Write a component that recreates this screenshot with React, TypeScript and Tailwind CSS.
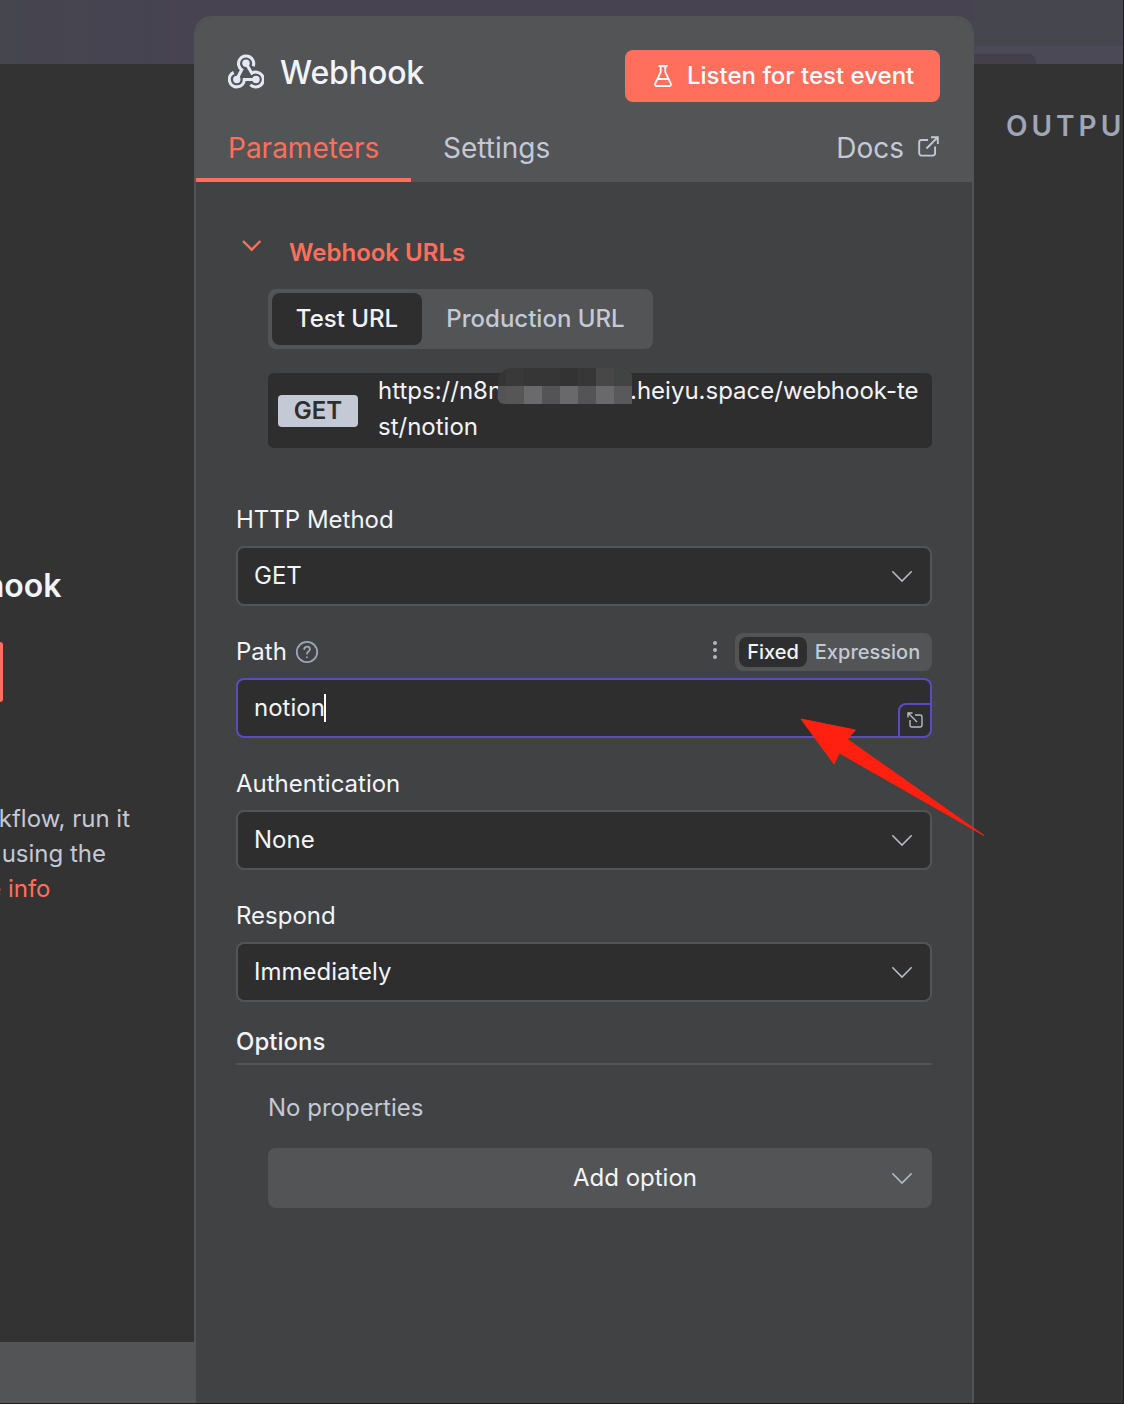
import { FC, ReactNode } from 'react'
import clsx from 'clsx'

interface FieldProps {
  label: ReactNode
  extra?: ReactNode
  children: ReactNode
}

const MOSAIC = [
  ['bg-[#353535]', 'bg-[#393939]', 'bg-[#363636]', 'bg-[#363637]', 'bg-[#333333]', 'bg-[#373737]', 'bg-[#474747]', 'bg-[#424343]'],
  ['bg-[#545456]', 'bg-[#565657]', 'bg-[#6a6a6c]', 'bg-[#545456]', 'bg-[#69696b]', 'bg-[#545456]', 'bg-[#69696b]', 'bg-[#59595b]'],
]

const Chevron: FC = () => (
  <svg className="mt-px h-3 w-[22px] shrink-0 text-[#b4bac7]" viewBox="0 0 22 12" fill="none" stroke="currentColor" strokeWidth="1.6" strokeLinecap="round">
    <path d="M1.8 .8 11 10 20.2 .8" />
  </svg>
)

const WebhookIcon: FC = () => (
  <svg className="-mt-0.5 size-9 shrink-0 text-[#e4e8f6]" viewBox="0 0 36 36" fill="none" stroke="currentColor" strokeWidth="3.1">
    <path d="M25.2 12.3A7.6 7.6 0 1 0 13.7 15.8L8.8 25.3" />
    <path d="M5.7 18.5A7.5 7.5 0 1 0 16.3 25.5H28" />
    <path d="M18 9.3 23.8 19.2A7.5 7.5 0 1 1 22.4 30.7" />
    <g fill="currentColor" stroke="none">
      <circle cx="18" cy="9.3" r="3.7" />
      <circle cx="8.8" cy="25.5" r="3.7" />
      <circle cx="28" cy="25.5" r="3.7" />
    </g>
  </svg>
)

const Field: FC<FieldProps> = ({ label, extra, children }) => {
  return (
    <div>
      <div className="flex h-[52px] items-center justify-between">
        <div className="flex items-center">{label}</div>
        {extra}
      </div>
      {children}
    </div>
  )
}

const Select: FC<{ value: string }> = ({ value }) => {
  return (
    <div className="flex h-[60px] items-center justify-between rounded-lg border-2 border-[#525455] bg-[#2e2e2e] pl-4 pr-[17px]">
      <span>{value}</span>
      <Chevron />
    </div>
  )
}

const Backdrop: FC<{ children?: ReactNode; className?: string }> = ({ children, className }) => (
  <div className={clsx('h-16 shrink-0', className)}>{children}</div>
)

const LeftPane: FC = () => {
  return (
    <aside className="flex w-[194px] shrink-0 flex-col overflow-hidden bg-[#333333]">
      <Backdrop className="bg-linear-to-r from-[#46464f] to-[#474351]" />
      <div className="mt-[502px] flex h-10 items-center justify-end pr-[132.5px] text-[32px] font-semibold whitespace-nowrap text-[#f2f4fd]">
        hook
      </div>
      <div className="mt-9 h-[60px] w-[3px] rounded-r-[3px] bg-[#ff6f5c]" />
      <div className="mt-[99px] text-2xl leading-[35px] whitespace-nowrap text-[#c3c9d5]">
        <p className="flex justify-end pr-[64px]">kflow, run it</p>
        <p className="flex justify-end pr-[88px]">using the</p>
        <p className="flex justify-end pr-[143.5px] text-[#ff6f5c]">e info</p>
      </div>
      <div className="mt-auto h-[61px] bg-[#525455]" />
    </aside>
  )
}

const RightPane: FC = () => {
  return (
    <aside className="flex min-w-0 flex-1 flex-col overflow-hidden bg-[#333333]">
      <Backdrop className="flex flex-col justify-end bg-[#46464f]">
        <div className="h-[18px] bg-[#4c4957] pt-2">
          <div className="h-2.5 w-[62px] rounded-tr-lg bg-[#433f4b]" />
        </div>
      </Backdrop>
      <div className="mt-10 pl-8 text-[28px] leading-[44px] font-semibold tracking-[4px] text-[#9fa6b5]">OUTPU</div>
    </aside>
  )
}

const Header: FC = () => {
  return (
    <header className="bg-[#525455] pt-8">
      <div className="flex h-[52px] justify-between px-8">
        <div className="flex items-center gap-4 pb-1.5">
          <WebhookIcon />
          <h1 className="text-[32px] font-medium tracking-[-0.1px]">Webhook</h1>
        </div>
        <button className="flex w-[315px] items-center rounded-lg bg-[#ff6f5c] pl-[29px] text-2xl font-medium text-white">
          <svg className="mr-[15px] h-[22px] w-[18px]" viewBox="0 0 18 22" fill="none" stroke="currentColor" strokeWidth="1.8" strokeLinejoin="round">
            <path d="M4.5 1h9M6.7 1v6.2L1.3 18.4C.7 19.8 1.4 21 2.7 21h12.6c1.3 0 2-1.2 1.4-2.6L11.3 7.2V1M3.6 14h10.8" />
          </svg>
          Listen for test event
        </button>
      </div>
      <nav className="flex h-20 text-[28px]">
        <div className="w-[215px] border-b-4 border-[#ff6f5c] pt-[25px] pl-8 leading-[42px] text-[#ff6f5c]">Parameters</div>
        <div className="pt-[25px] pl-8 leading-[42px] text-[#c3c9d5]">Settings</div>
        <div className="ml-auto flex pt-[25px] pr-[33px] leading-[42px] text-[#c3c9d5]">
          Docs
          <svg className="mt-[9px] ml-[14px] size-[21px]" viewBox="0 0 21 21" fill="none" stroke="currentColor" strokeWidth="1.9">
            <path d="M10 4H3.5A2.3 2.3 0 0 0 1.2 6.3v11A2.3 2.3 0 0 0 3.5 19.6h11.3a2.3 2.3 0 0 0 2.3-2.3V10.5M13 1.2h6.8V8M19.6 1.4 8.5 12.5" />
          </svg>
        </div>
      </nav>
    </header>
  )
}

const WebhookUrls: FC = () => {
  return (
    <section>
      <div className="flex h-9 text-[#ff6f5c]">
        <svg className="mt-[5px] ml-[6px] h-3 w-5" viewBox="0 0 20 12" fill="none" stroke="currentColor" strokeWidth="2.4">
          <path d="M1 1 9.7 9.7 18.4 1" />
        </svg>
        <h2 className="ml-[27px] leading-9 font-semibold">Webhook URLs</h2>
      </div>
      <div className="mt-[18px] ml-8 flex h-[60px] w-[385px] rounded-lg bg-[#525455] p-1 font-medium">
        <div className="flex w-[150px] items-center justify-center rounded-lg bg-[#2e2e2e]">Test URL</div>
        <div className="flex flex-1 items-center justify-center text-[#c3c9d5]">Production URL</div>
      </div>
      <div className="mt-6 ml-8 flex h-[75px] rounded-md bg-[#2e2e2e] pl-2.5">
        <div className="mt-[22px] flex h-8 w-20 items-center justify-center rounded bg-[#c3c9d5] font-semibold text-[#2e2e2e]">GET</div>
        <div className="ml-5 leading-9 whitespace-nowrap">
          <div className="flex">
            <span className="w-[127px]">https://n8n</span>
            <span className="relative z-10 w-[125px]">
              {/* blurred out host name */}
              <span className="absolute -top-[5px] -left-[7px] grid w-[136px] grid-cols-[8px_repeat(7,18px)] overflow-hidden rounded-t-[14px] rounded-bl-[6px]">
                {MOSAIC.map((row, y) => row.map((cell, x) => <i key={`${y}-${x}`} className={clsx('h-[18px]', cell)} />))}
              </span>
            </span>
            <span>.heiyu.space/webhook-te</span>
          </div>
          <div>st/notion</div>
        </div>
      </div>
    </section>
  )
}

const PathField: FC = () => {
  return (
    <Field
      label={
        <>
          Path
          <svg className="ml-2 size-6 text-[#9fa6b5]" viewBox="0 0 24 24" fill="none" stroke="currentColor" strokeWidth="1.8" strokeLinecap="round">
            <circle cx="12" cy="12" r="10.2" />
            <path d="M9.2 9.2c.3-1.7 1.4-2.5 2.9-2.5 1.6 0 2.8 1 2.8 2.5 0 2.2-2.9 2.3-2.9 4.5M12 17.2v.1" />
          </svg>
        </>
      }
      extra={
        <div className="flex items-center">
          <div className="mr-[18px] flex flex-col gap-[3px] pb-1">
            <i className="size-1 rounded-full bg-[#b0b6c3]" />
            <i className="size-1 rounded-full bg-[#b0b6c3]" />
            <i className="size-1 rounded-full bg-[#b0b6c3]" />
          </div>
          <div className="flex h-[38px] w-[197px] rounded-lg bg-[#525455] p-1 text-xl font-medium">
            <div className="flex w-[68px] items-center justify-center rounded-lg bg-[#2e2e2e]">Fixed</div>
            <div className="flex flex-1 items-center justify-center text-[#c3c9d5]">Expression</div>
          </div>
        </div>
      }
    >
      <div className="flex h-[60px] items-center overflow-hidden rounded-lg border-2 border-[#5b4bbf] bg-[#2e2e2e] pl-4">
        <span>notion</span>
        <i className="-ml-px h-7 w-0.5 bg-white" />
        <div className="ml-auto flex h-[33px] w-8 items-center justify-center self-end rounded-tl-lg border-t-2 border-l-2 border-[#5b4bbf] pb-0.5">
          <svg className="size-4 text-[#b4bac7]" viewBox="0 0 16 16" fill="none" stroke="currentColor" strokeWidth="1.4">
            <path d="M1 5.5V1h4.5M1.3 1.3 10 10M8 3h5a2 2 0 0 1 2 2v8a2 2 0 0 1-2 2H5a2 2 0 0 1-2-2V8" />
          </svg>
        </div>
      </div>
    </Field>
  )
}

const App: FC = () => {
  return (
    <div className="relative flex h-[1404px] w-[1124px] overflow-hidden border-r border-b border-[#1f1f1f] bg-[#474351] font-['Inter',sans-serif]">
      <LeftPane />
      <div className="w-[780px] shrink-0 bg-linear-to-b from-[#474351] from-64px to-[#333333] to-64px pt-4">
        <main className="flex h-full flex-col overflow-hidden rounded-t-[18px] border-2 border-b-0 border-[#525455] bg-[#414243] text-2xl text-[#f2f4fd]">
          <Header />
          <div className="px-10 pt-[53px]">
            <WebhookUrls />
            <div className="mt-[46px] flex flex-col gap-5">
              <Field label="HTTP Method">
                <Select value="GET" />
              </Field>
              <PathField />
              <Field label="Authentication">
                <Select value="None" />
              </Field>
              <Field label="Respond">
                <Select value="Immediately" />
              </Field>
            </div>
            <h3 className="mt-5 h-[43px] border-b-2 border-[#525455] leading-10 font-medium">Options</h3>
            <p className="mt-[23px] ml-8 leading-10 text-[#c3c9d5]">No properties</p>
            <div className="mt-5 ml-8 flex h-[60px] items-center rounded-lg bg-[#525455] pr-[19px] pl-[111px]">
              <span className="flex-1 text-center">Add option</span>
              <Chevron />
            </div>
          </div>
        </main>
      </div>
      <RightPane />

      <svg className="absolute top-[716px] left-[799px] h-[124px] w-[188px]" viewBox="799 716 188 124" fill="#ff2010" stroke="#ff2010" strokeLinejoin="round">
        <path d="M801 719 855.5 730 847.3 739.3 984 835.5 839.3 753 834 764Z" />
      </svg>
    </div>
  )
}

export default App
